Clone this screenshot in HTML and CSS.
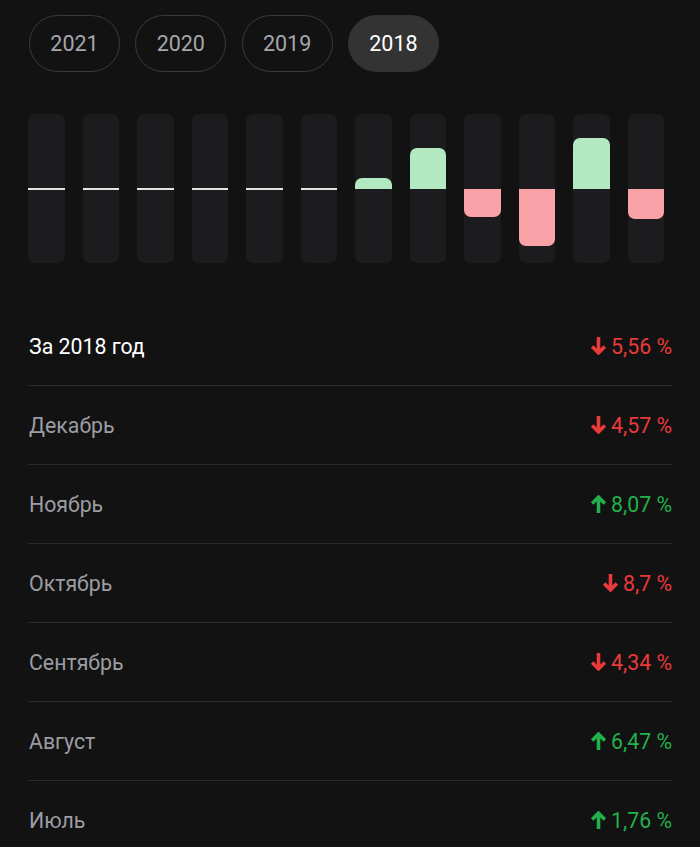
FILE: index.html
```html
<!DOCTYPE html>
<html lang="ru">
<head>
<meta charset="utf-8">
<link rel="stylesheet" href="styles.css">
</head>
<body>
<div class="page">
  <div class="years">
    <div class="pill">2021</div>
    <div class="pill">2020</div>
    <div class="pill">2019</div>
    <div class="pill active">2018</div>
  </div>

  <div class="chart">
    <div class="col"><div class="mid"></div></div>
    <div class="col"><div class="mid"></div></div>
    <div class="col"><div class="mid"></div></div>
    <div class="col"><div class="mid"></div></div>
    <div class="col"><div class="mid"></div></div>
    <div class="col"><div class="mid"></div></div>
    <div class="col"><div class="half top"><div class="bar up" style="height:11px"></div></div><div class="half"></div></div>
    <div class="col"><div class="half top"><div class="bar up" style="height:41px"></div></div><div class="half"></div></div>
    <div class="col"><div class="half top"></div><div class="half"><div class="bar down" style="height:28px"></div></div></div>
    <div class="col"><div class="half top"></div><div class="half"><div class="bar down" style="height:57px"></div></div></div>
    <div class="col"><div class="half top"><div class="bar up" style="height:51px"></div></div><div class="half"></div></div>
    <div class="col"><div class="half top"></div><div class="half"><div class="bar down" style="height:30px"></div></div></div>
  </div>

  <div class="list">
    <div class="row total">
      <span class="label">За 2018 год</span>
      <span class="value neg"><svg class="arrow" viewBox="0 0 16 17"><path d="M8 0v15M2 9l6 6 6-6"/></svg>5,56 %</span>
    </div>
    <div class="row">
      <span class="label">Декабрь</span>
      <span class="value neg"><svg class="arrow" viewBox="0 0 16 17"><path d="M8 0v15M2 9l6 6 6-6"/></svg>4,57 %</span>
    </div>
    <div class="row">
      <span class="label">Ноябрь</span>
      <span class="value pos"><svg class="arrow" viewBox="0 0 16 17"><path d="M8 17V2M2 8l6-6 6 6"/></svg>8,07 %</span>
    </div>
    <div class="row">
      <span class="label">Октябрь</span>
      <span class="value neg"><svg class="arrow" viewBox="0 0 16 17"><path d="M8 0v15M2 9l6 6 6-6"/></svg>8,7 %</span>
    </div>
    <div class="row">
      <span class="label">Сентябрь</span>
      <span class="value neg"><svg class="arrow" viewBox="0 0 16 17"><path d="M8 0v15M2 9l6 6 6-6"/></svg>4,34 %</span>
    </div>
    <div class="row">
      <span class="label">Август</span>
      <span class="value pos"><svg class="arrow" viewBox="0 0 16 17"><path d="M8 17V2M2 8l6-6 6 6"/></svg>6,47 %</span>
    </div>
    <div class="row">
      <span class="label">Июль</span>
      <span class="value pos"><svg class="arrow" viewBox="0 0 16 17"><path d="M8 17V2M2 8l6-6 6 6"/></svg>1,76 %</span>
    </div>
  </div>
</div>
</body>
</html>
```

FILE: styles.css
```css
html, body {
  margin: 0;
  padding: 0;
  background: #121212;
}
body {
  font-family: Roboto, "Noto Sans", sans-serif;
  color: #ffffff;
  height: 847px;
  overflow: hidden;
}
.page {
  padding: 15px 28px 0 28px;
}
.years {
  display: flex;
  gap: 15.3px;
  padding-left: 1px;
}
.pill {
  box-sizing: border-box;
  width: 91px;
  height: 57px;
  border: 1.5px solid #3a3a3a;
  border-radius: 29px;
  display: flex;
  align-items: center;
  justify-content: center;
  font-size: 21.5px;
  color: #a6a6ac;
}
.pill.active {
  background: #333333;
  border-color: #333333;
  color: #ffffff;
}
.chart {
  margin-top: 42px;
  height: 149px;
  display: grid;
  grid-template-columns: repeat(12, 36.4px);
  column-gap: 18.1px;
  padding-left: 0.3px;
}
.col {
  background: #1c1c1e;
  border-radius: 7px;
  display: flex;
  flex-direction: column;
  justify-content: center;
  position: relative;
}
.mid {
  height: 2px;
  background: #e4e4e4;
  margin-top: 1px;
}
.half {
  height: 74.5px;
  display: flex;
  flex-direction: column;
}
.half.top {
  justify-content: flex-end;
}
.bar.up {
  background: #b3e9c1;
  border-radius: 7px 7px 0 0;
}
.bar.down {
  background: #f9a3a8;
  border-radius: 0 0 7px 7px;
}
.list {
  margin-top: 44px;
}
.row {
  height: 78px;
  border-bottom: 1px solid #2a2a2a;
  display: flex;
  align-items: center;
  justify-content: space-between;
  font-size: 21.3px;
}
.row:last-child {
  border-bottom: none;
}
.label {
  color: #9c9ca3;
  padding-left: 1px;
}
.row.total .label {
  color: #ffffff;
}
.value {
  display: flex;
  align-items: center;
  gap: 4px;
}
.value.neg {
  color: #e93a3a;
}
.value.pos {
  color: #22b04a;
}
.arrow {
  width: 17px;
  height: 18px;
  fill: none;
  stroke: currentColor;
  stroke-width: 3.4;
}
```
